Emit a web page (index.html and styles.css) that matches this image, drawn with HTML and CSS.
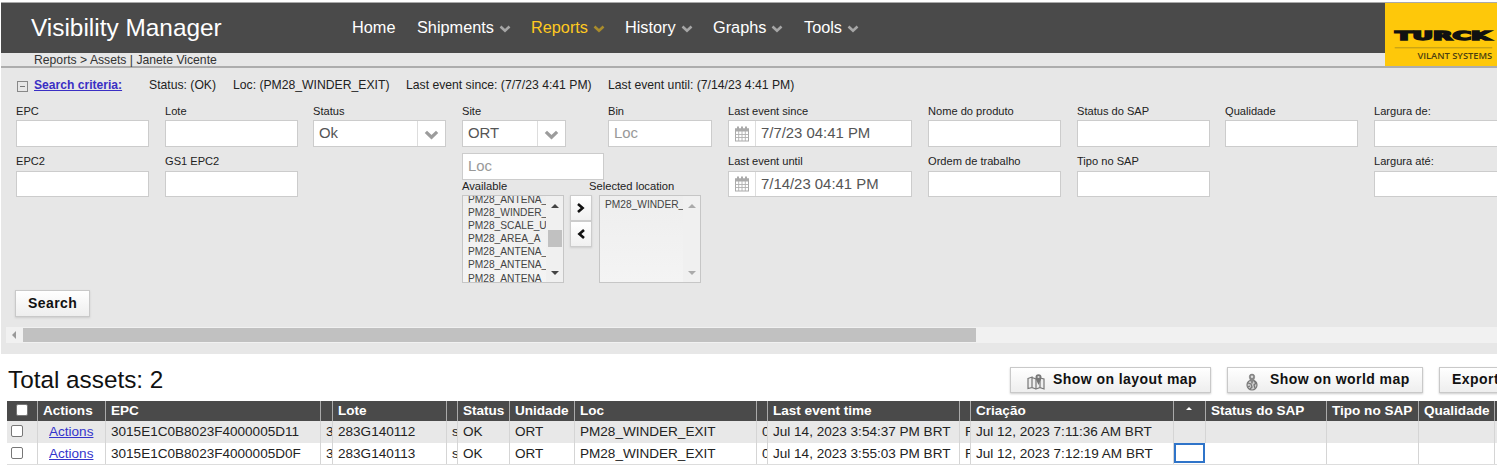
FILE: index.html
```html
<!DOCTYPE html>
<html lang="pt">
<head>
<meta charset="utf-8">
<title>Visibility Manager</title>
<link rel="stylesheet" href="styles.css">
</head>
<body>
<svg width="0" height="0" class="defs">
  <symbol id="chev" viewBox="0 0 12 8"><path d="M1.500 1.500 6 5.800 10.500 1.500" fill="none" stroke="currentColor" stroke-width="2.600"/></symbol>
  <symbol id="cal" viewBox="0 0 16 16"><rect x="1.500" y="3" width="13" height="12" fill="#fff" stroke="#aaa"/><path d="M1 2.500h14v3H1z" fill="#aaa"/><path d="M4 .5v4M8 .5v4M12 .5v4" stroke="#aaa" stroke-width="2"/><path d="M1.500 8.500h13M1.500 11.500h13M4.700 5v10M8 5v10M11.300 5v10" stroke="#b0b0b0" stroke-width=".9"/></symbol>
</svg>
<div class="top">
  <div class="left">
    <header class="bar">
      <h1 class="brand">Visibility Manager</h1>
      <nav class="nav">
        <a class="n-home">Home</a>
        <a class="n-ship">Shipments<svg><use href="#chev"/></svg></a>
        <a class="n-rep active">Reports<svg><use href="#chev"/></svg></a>
        <a class="n-his">History<svg><use href="#chev"/></svg></a>
        <a class="n-gra">Graphs<svg><use href="#chev"/></svg></a>
        <a>Tools<svg><use href="#chev"/></svg></a>
      </nav>
    </header>
    <div class="crumbs">Reports &gt; Assets | Janete Vicente</div>
  </div>
  <svg class="logo" width="112" height="64" viewBox="0 0 112 64">
    <text x="9.500" y="37.500" textLength="97" lengthAdjust="spacingAndGlyphs" class="turck">TURCK</text>
    <path d="M9 45.500h99" stroke="#a58a20" stroke-width=".8"/>
    <text x="32" y="57" textLength="76" lengthAdjust="spacingAndGlyphs" class="vilant">VILANT SYSTEMS</text>
  </svg>
</div>
<section class="panel">
  <div class="criteria">
    <span class="minus"></span><a class="crit-link">Search criteria:</a>
    <span class="c1">Status: (OK)</span><span class="c2">Loc: (PM28_WINDER_EXIT)</span><span class="c3">Last event since: (7/7/23 4:41 PM)</span><span>Last event until: (7/14/23 4:41 PM)</span>
  </div>
  <div class="fields">
    <div class="col"><label>EPC</label><div class="in"></div><label class="second">EPC2</label><div class="in low"></div></div>
    <div class="col"><label>Lote</label><div class="in"></div><label class="second">GS1 EPC2</label><div class="in low"></div></div>
    <div class="col"><label>Status</label><div class="in sel">Ok<span class="drop"><svg><use href="#chev"/></svg></span></div></div>
    <div class="col place">
      <div class="pair">
        <div class="site"><label>Site</label><div class="in sel">ORT<span class="drop"><svg><use href="#chev"/></svg></span></div></div>
        <div class="bin"><label>Bin</label><div class="in ph">Loc</div></div>
      </div>
      <div class="in ph loc">Loc</div>
      <div class="lab2"><span>Available</span><span>Selected location</span></div>
      <div class="lists">
        <div class="list avail">
          <div class="items"><div>PM28_ANTENA_</div><div>PM28_WINDER_</div><div>PM28_SCALE_U</div><div>PM28_AREA_A</div><div>PM28_ANTENA_</div><div>PM28_ANTENA_</div><div>PM28_ANTENA</div></div>
          <div class="track"><i class="up"></i><b class="thumb"></b><i class="down"></i></div>
        </div>
        <div class="moves">
          <span><svg width="8" height="10" viewBox="0 0 8 10"><path d="M1 1 5.600 5 1 9" /></svg></span>
          <span><svg width="8" height="10" viewBox="0 0 8 10"><path d="M7 1 2.400 5 7 9" /></svg></span>
        </div>
        <div class="list chosen">
          <div class="items"><div>PM28_WINDER_</div></div>
          <div class="track"><i class="up"></i><i class="down"></i></div>
        </div>
      </div>
    </div>
    <div class="col date"><label>Last event since</label><div class="in"><span class="cal"><svg><use href="#cal"/></svg></span>7/7/23 04:41 PM</div><label class="second">Last event until</label><div class="in low"><span class="cal"><svg><use href="#cal"/></svg></span>7/14/23 04:41 PM</div></div>
    <div class="col"><label>Nome do produto</label><div class="in"></div><label class="second">Ordem de trabalho</label><div class="in low"></div></div>
    <div class="col"><label>Status do SAP</label><div class="in"></div><label class="second">Tipo no SAP</label><div class="in low"></div></div>
    <div class="col"><label>Qualidade</label><div class="in"></div></div>
    <div class="col"><label>Largura de:</label><div class="in"></div><label class="second">Largura até:</label><div class="in low"></div></div>
  </div>
  <div class="btn search">Search</div>
  <div class="hscroll"><i></i><b></b></div>
</section>
<div class="tools">
  <h2>Total assets: 2</h2>
  <div class="btn b-layout"><svg width="18" height="17" viewBox="0 0 18 17"><g fill="#eee" stroke="#777" stroke-width="1.200"><path d="M1 5.500 5 4v10.500L1 15.500zM5 4.500 9 6v10l-4-1.500zM9 6l4-1.500v10L9 16zM13 5l4 1v10l-4-1.500z"/></g><path d="M11.500 12C10 8 8.500 6.500 8.500 4.200a3 3 0 0 1 6 0c0 2.300-1.500 3.800-3 7.800z" fill="#777"/><circle cx="11.500" cy="4" r="1.100" fill="#ddd"/></svg>Show on layout map</div>
  <div class="btn b-world"><svg width="14" height="18" viewBox="0 0 14 18"><circle cx="7" cy="12" r="5" fill="#ccc" stroke="#777" stroke-width="1.200"/><path d="M3 10l3 1 1 3-2 2M9 8l2 2-2 2 1 3M3 14l2-1" fill="none" stroke="#777" stroke-width="1.300"/><path d="M7 10.500C5.800 7.500 4.300 6 4.300 3.800a2.700 2.700 0 0 1 5.400 0c0 2.200-1.500 3.700-2.700 6.700z" fill="#888" stroke="#777" stroke-width=".6"/><circle cx="7" cy="3.800" r="1.200" fill="#ddd"/></svg>Show on world map</div>
  <div class="btn b-export">Export</div>
</div>
<div class="table">
  <div class="row head"><div class="chk"><span class="box"></span></div><div>Actions</div><div>EPC</div><div></div><div>Lote</div><div></div><div>Status</div><div>Unidade</div><div>Loc</div><div></div><div>Last event time</div><div></div><div>Criação</div><div class="sort"><i></i></div><div>Status do SAP</div><div>Tipo no SAP</div><div>Qualidade</div><div></div></div>
  <div class="row odd"><div class="chk"><span class="box"></span></div><div class="act"><a>Actions</a></div><div>3015E1C0B8023F4000005D11</div><div>3</div><div>283G140112</div><div>s</div><div>OK</div><div>ORT</div><div>PM28_WINDER_EXIT</div><div>0</div><div>Jul 14, 2023 3:54:37 PM BRT</div><div>F</div><div>Jul 12, 2023 7:11:36 AM BRT</div><div></div><div></div><div></div><div></div><div></div></div>
  <div class="row"><div class="chk"><span class="box"></span></div><div class="act"><a>Actions</a></div><div>3015E1C0B8023F4000005D0F</div><div>3</div><div>283G140113</div><div>s</div><div>OK</div><div>ORT</div><div>PM28_WINDER_EXIT</div><div>0</div><div>Jul 14, 2023 3:55:03 PM BRT</div><div>F</div><div>Jul 12, 2023 7:12:19 AM BRT</div><div class="focus"></div><div></div><div></div><div></div><div></div></div>
</div>
</body>
</html>
```
FILE: styles.css
```css
* { box-sizing: border-box; }
body { margin: 0; padding: 2px 0 0 1px; height: 467px; overflow: hidden; background: #fff; color: #222; font-family: "Liberation Sans", Arial, sans-serif; }
.defs { position: absolute; }
h1, h2 { margin: 0; font-weight: normal; }
.top { display: flex; height: 66px; border-top: 1px solid #aaa; border-bottom: 2px solid #adadad; background: #e7e7e7; }
.left { width: 1384px; }
.bar { display: flex; height: 50px; background: #4a4a4a; color: #fff; }
.brand { width: 321px; padding-left: 30px; margin-right: 30px; font-size: 24.4px; line-height: 50px; white-space: nowrap; }
.nav { display: flex; font-size: 16.3px; line-height: 49px; }
.nav a { white-space: nowrap; }
.nav svg { width: 12px; height: 8px; margin-left: 5px; color: #a6a6a6; }
.nav .active { color: #ffc91f; }
.nav .active svg { color: #a98c2c; }
.n-home { width: 65px; }
.n-ship { width: 114px; }
.n-rep { width: 94px; }
.n-his { width: 88px; }
.n-gra { width: 91px; }
.crumbs { height: 13px; padding-left: 33px; line-height: 15px; font-size: 12.2px; color: #333; }
.logo { display: block; width: 112px; height: 63px; background: #fec80a; }
.turck { font: bold 11.8px "DejaVu Sans", sans-serif; fill: #111; stroke: #111; stroke-width: 1.5px; }
.vilant { font: 600 9.6px "Open Sans", sans-serif; fill: #4c4010; }

.panel { height: 286px; background: #e7e7e7; padding-top: 9px; overflow: hidden; }
.criteria { display: flex; height: 18px; padding-left: 16px; line-height: 17px; font-size: 12.2px; white-space: nowrap; }
.minus { width: 11px; height: 11px; margin: 4px 6px 0 0; border: 1px solid #888; background: linear-gradient(#777, #777) center / 5px 1px no-repeat; }
.crit-link { width: 115px; color: #3a2fc4; font-weight: bold; font-size: 12.1px; text-decoration: underline; }
.c1 { width: 84px; }
.c2 { width: 173px; }
.c3 { width: 202px; }
.fields { display: grid; grid-template-columns: 149px 148px 149px 266px 200px 149px 148px 149px 133px; height: 195px; padding: 9px 0 0 15px; }
label { display: block; height: 16px; line-height: 15px; font-size: 11.1px; white-space: nowrap; }
.second { height: 17px; margin-top: 7px; }
.in { display: flex; width: 133px; height: 27px; border: 1px solid #ccc; background: #fff; font-size: 14.9px; line-height: 25px; color: #555; padding-left: 5px; white-space: nowrap; }
.low { height: 26px; line-height: 24px; }
.ph { color: #999; width: 104px; }
.loc { width: 142px; margin-top: 6px; }
.drop { display: flex; width: 28px; margin-left: auto; align-items: center; justify-content: center; border-left: 1px solid #ddd; }
.drop svg { width: 15px; height: 10px; margin-top: 2px; color: #9c9c9c; }
.pair { display: flex; }
.site { width: 146px; }
.site .in { width: 104px; }
.date .in { width: 184px; padding: 0; }
.cal { width: 27px; margin-right: 5px; border-right: 1px solid #ddd; display: flex; align-items: center; justify-content: center; }
.cal svg { width: 16px; height: 16px; }
.lab2 { display: flex; font-size: 11.2px; height: 15px; line-height: 13px; white-space: nowrap; }
.lab2 span:first-child { width: 127px; }
.lists { display: flex; }
.list { display: flex; height: 88px; width: 102px; border: 1px solid #c6c6c6; background: linear-gradient(#eee, #f4f4f4); font-size: 10.2px; color: #444; overflow: hidden; }
.items { width: 83px; padding: 0 0 0 5px; overflow: hidden; white-space: nowrap; }
.items div { height: 13.1px; line-height: 13px; }
.avail .items div:first-child { margin-top: -3px; }
.chosen .items { padding-top: 2px; }
.track { display: flex; flex-direction: column; align-items: center; width: 17px; padding: 8px 0 7px; background: #f0f0f0; }
.up { border: 4px solid transparent; border-top: 0; border-bottom-color: #444; }
.down { margin-top: auto; border: 4px solid transparent; border-bottom: 0; border-top-color: #444; }
.thumb { width: 14px; height: 17px; margin-top: 22px; background: #c1c1c1; }
.chosen .up { border-bottom-color: #aaa; }
.chosen .down { border-top-color: #aaa; }
.moves { width: 22px; margin: 0 7px 0 6px; }
.moves span { display: flex; height: 26px; align-items: center; justify-content: center; border: 1px solid #ccc; background: linear-gradient(#fff, #f0f0f0); box-shadow: 0 1px 2px #ccc; }
.moves path { fill: none; stroke: #111; stroke-width: 2.6; }
.btn { display: flex; height: 26px; border: 1px solid #c9c9c9; background: linear-gradient(#fff, #eee); box-shadow: 0 1px 2px #ccc; font-size: 14px; font-weight: bold; letter-spacing: .44px; line-height: 23px; color: #111; white-space: nowrap; flex: none; }
.search { width: 75px; height: 27px; margin: 0 0 0 14px; padding-left: 12px; line-height: 24px; }
.hscroll { display: flex; align-items: center; height: 16px; margin: 10px 0 0 5px; background: #f1f1f1; }
.hscroll i { margin: 0 7px 0 6px; border: 4px solid transparent; border-left: 0; border-right-color: #999; }
.hscroll b { width: 953px; height: 14px; background: #c1c1c1; }

.tools { display: flex; height: 47px; padding: 13px 0 0 7px; overflow: hidden; }
h2 { flex: none; width: 1002px; font-size: 24.3px; line-height: 26px; color: #111; }
.b-layout { width: 201px; margin-right: 16px; padding-left: 16px; }
.b-layout svg { margin: 5px 8px 0 0; }
.b-world { width: 196px; margin-right: 16px; padding-left: 17px; }
.b-world svg { margin: 5px 11px 0 0; }
.b-export { width: 80px; padding-left: 12px; }
.table { margin-left: 6px; font-size: 13.55px; }
.row { display: grid; grid-template-columns: 31px 68px 215px 12px 114px 11px 52px 65px 182px 11px 192px 11px 203px 32px 121px 92px 76px 20px; height: 22px; line-height: 21px; border-bottom: 1px solid #ddd; white-space: nowrap; }
.row > div { padding-left: 5px; border-right: 1px solid #d5d5d5; overflow: hidden; }
.head { height: 20px; line-height: 20px; border: 0; background: #4a4a4a; color: #fff; font-weight: bold; }
.head > div { border-color: #aaa; }
.odd { background: #e8e8e8; border: 0; }
.row > .act { padding-left: 11px; line-height: 22px; }
.act a { color: #3434cc; text-decoration: underline; }
.box { display: block; width: 12px; height: 12px; margin-top: 4px; border: 1px solid #777; border-radius: 2px; background: #fff; }
.row > .chk { padding-left: 4px; }
.head > .chk { padding-left: 9px; }
.head .box { margin-top: 3px; }
.sort i { display: block; width: 6px; margin: 6px 0 0 7px; border: 3px solid transparent; border-top: 0; border-bottom-color: #fff; }
.row > .focus { border: 2px solid #2f74c9; margin: 0 1px 0 0; height: 20px; }
```
